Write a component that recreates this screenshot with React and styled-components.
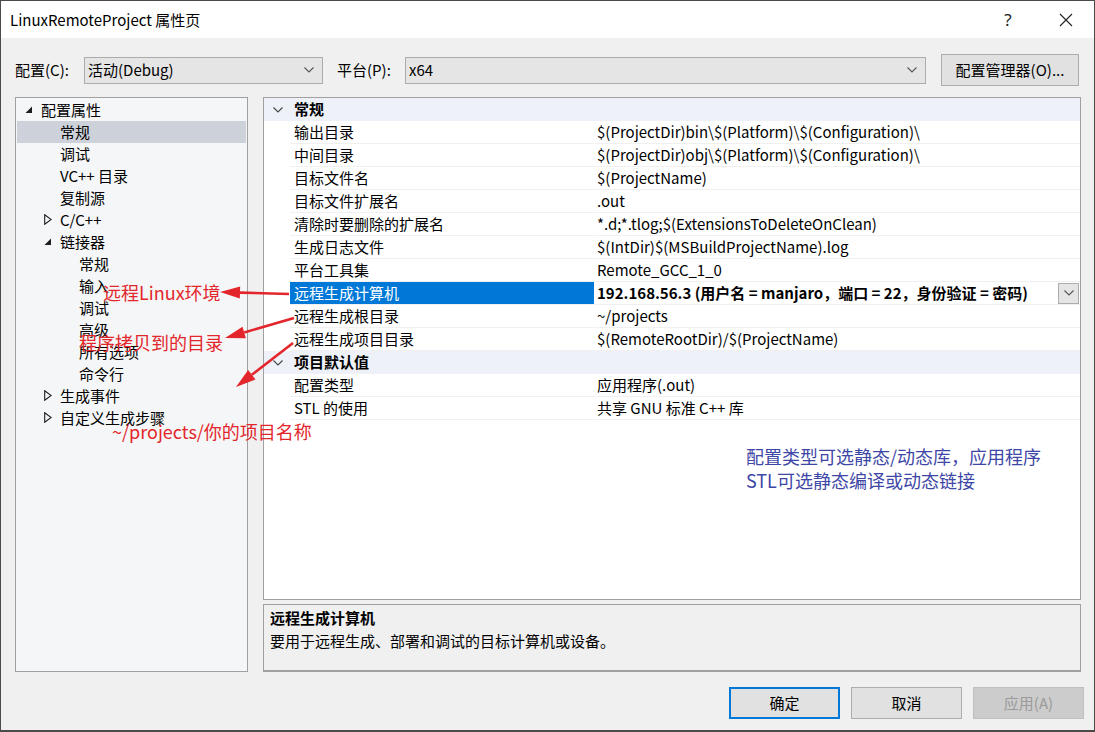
import React from 'react'
import styled, { createGlobalStyle } from 'styled-components'

const FONT = `"Noto Sans CJK SC", "Noto Sans", sans-serif`

const GlobalStyle = createGlobalStyle`
    html, body {
        margin: 0;
        padding: 0;
        background: #f0f0f0;
    }
    * {
        box-sizing: border-box;
    }
`

const Window = styled.div`
    position: relative;
    width: 1095px;
    height: 732px;
    display: flex;
    flex-direction: column;
    background: #f0f0f0;
    border: 1px solid #4a4a4a;
    border-bottom-width: 2px;
    font-family: ${FONT};
    font-size: 15px;
    color: #000;
    overflow: hidden;
`

const TitleBar = styled.div`
    height: 37px;
    flex-shrink: 0;
    display: flex;
    align-items: center;
    background: #fff;
    padding-left: 9px;
    .title__text {
        flex: 1;
        font-size: 15px;
        padding-bottom: 1px;
    }
    .title__help {
        width: 40px;
        text-align: center;
        font-family: "Noto Sans", sans-serif;
        font-size: 17px;
        color: #222;
        margin-right: 10px;
    }
    .title__close {
        width: 56px;
        display: flex;
        justify-content: center;
    }
`

const Body = styled.div`
    flex: 1;
    display: flex;
    flex-direction: column;
    padding: 16px 13px 0 14px;
`

const ConfigRow = styled.div`
    display: flex;
    align-items: center;
    height: 32px;
`

const Label = styled.span`
    width: ${p => p.$w}px;
    margin-left: ${p => p.$ml || 0}px;
    flex-shrink: 0;
    padding-bottom: 1px;
`

const Combo = styled.div`
    width: ${p => p.$w}px;
    height: 27px;
    display: flex;
    align-items: center;
    justify-content: space-between;
    padding: 0 8px 1px 3px;
    background: #e5e5e5;
    border: 1px solid #acacac;
`

const Button = styled.div`
    width: ${p => p.$w || 111}px;
    height: 32px;
    display: flex;
    align-items: center;
    justify-content: center;
    padding-bottom: 1px;
    margin-left: ${p => p.$ml || 0}px;
    background: ${p => (p.$disabled ? '#cccccc' : '#e1e1e1')};
    color: ${p => (p.$disabled ? '#9a9a9a' : '#000')};
    border: ${p => (p.$primary ? '2px solid #0078d7' : `1px solid ${p.$disabled ? '#bfbfbf' : '#adadad'}`)};
`

const Main = styled.div`
    margin-top: 11px;
    height: 575px;
    display: flex;
    gap: 15px;
`

const Tree = styled.div`
    width: 233px;
    flex-shrink: 0;
    background: #f5f6f7;
    border: 1px solid #a0a0a0;
    padding-top: 1px;
`

const TreeRow = styled.div`
    height: 22px;
    display: flex;
    align-items: center;
    margin: 0 1px;
    padding-bottom: 1px;
    padding-left: ${p => p.$level * 19 + 8}px;
    background: ${p => (p.$selected ? '#cdd1da' : 'transparent')};
    .tree__icon {
        width: 16px;
        flex-shrink: 0;
        display: flex;
        align-items: center;
    }
`

const RightColumn = styled.div`
    flex: 1;
    display: flex;
    flex-direction: column;
    gap: 4px;
`

const Grid = styled.div`
    height: 503px;
    background: #fff;
    border: 1px solid #a0a0a0;
`

const GridRow = styled.div`
    height: 23px;
    display: flex;
    background: ${p => (p.$category ? '#eef2f8' : '#fff')};
    font-weight: ${p => (p.$category ? 700 : 400)};
    .grid__gutter {
        width: 26px;
        flex-shrink: 0;
        display: flex;
        align-items: center;
        justify-content: center;
        padding-left: 2px;
    }
`

const NameCell = styled.div`
    width: 304px;
    flex-shrink: 0;
    display: flex;
    align-items: center;
    padding-left: 4px;
    padding-bottom: 1px;
    border-bottom: 1px solid ${p => (p.$category ? 'transparent' : '#f0f0f0')};
    background: ${p => (p.$selected ? '#0078d7' : 'transparent')};
    color: ${p => (p.$selected ? '#fff' : '#000')};
`

const ValueCell = styled.div`
    flex: 1;
    display: flex;
    align-items: center;
    padding-left: 2px;
    margin-left: 1px;
    border-bottom: 1px solid ${p => (p.$category ? 'transparent' : '#f0f0f0')};
    font-weight: ${p => (p.$bold ? 700 : 400)};
    .value__text {
        flex: 1;
        white-space: nowrap;
        padding-bottom: 1px;
    }
`

const DropButton = styled.div`
    width: 21px;
    height: 21px;
    margin-right: 1px;
    display: flex;
    align-items: center;
    justify-content: center;
    background: #e5e5e5;
    border: 1px solid #acacac;
`

const Description = styled.div`
    height: 68px;
    border: 1px solid #a0a0a0;
    border-bottom-width: 2px;
    background: #f0f0f0;
    padding: 1px 6px;
    line-height: 23px;
    .desc__title {
        font-weight: 700;
    }
`

const ButtonRow = styled.div`
    margin-top: 15px;
    margin-right: -3px;
    display: flex;
    justify-content: flex-end;
`

const Note = styled.div`
    position: absolute;
    left: ${p => p.$x}px;
    top: ${p => p.$y}px;
    font-size: 18px;
    line-height: ${p => p.$lh || 22}px;
    color: ${p => p.$color};
    white-space: nowrap;
    pointer-events: none;
`

const Overlay = styled.svg`
    position: absolute;
    left: 0;
    top: 0;
    pointer-events: none;
`

const Chevron = ({ color = '#444' }) => (
    <svg width='10' height='6' viewBox='0 0 10 6'>
        <polyline points='0.5,0.5 5,5 9.5,0.5' fill='none' stroke={color} strokeWidth='1.1' />
    </svg>
)

const TreeArrow = ({ open }) => (
    open ? (
        <svg width='8' height='8' viewBox='0 0 8 8'>
            <polygon points='7,0.5 7,7 0.5,7' fill='#1e1e1e' />
        </svg>
    ) : (
        <svg width='8' height='11' viewBox='0 0 8 11'>
            <polygon points='0.7,0.7 7.2,5.5 0.7,10.3' fill='none' stroke='#1e1e1e' strokeWidth='1.1' />
        </svg>
    )
)

const treeItems = [
    { label: '配置属性', level: 0, open: true },
    { label: '常规', level: 1, selected: true },
    { label: '调试', level: 1 },
    { label: 'VC++ 目录', level: 1 },
    { label: '复制源', level: 1 },
    { label: 'C/C++', level: 1, open: false },
    { label: '链接器', level: 1, open: true },
    { label: '常规', level: 2 },
    { label: '输入', level: 2 },
    { label: '调试', level: 2 },
    { label: '高级', level: 2 },
    { label: '所有选项', level: 2 },
    { label: '命令行', level: 2 },
    { label: '生成事件', level: 1, open: false },
    { label: '自定义生成步骤', level: 1, open: false },
]

const gridRows = [
    { category: '常规' },
    { name: '输出目录', value: '$(ProjectDir)bin\\$(Platform)\\$(Configuration)\\' },
    { name: '中间目录', value: '$(ProjectDir)obj\\$(Platform)\\$(Configuration)\\' },
    { name: '目标文件名', value: '$(ProjectName)' },
    { name: '目标文件扩展名', value: '.out' },
    { name: '清除时要删除的扩展名', value: '*.d;*.tlog;$(ExtensionsToDeleteOnClean)' },
    { name: '生成日志文件', value: '$(IntDir)$(MSBuildProjectName).log' },
    { name: '平台工具集', value: 'Remote_GCC_1_0' },
    { name: '远程生成计算机', value: '192.168.56.3 (用户名 = manjaro，端口 = 22，身份验证 = 密码)', selected: true },
    { name: '远程生成根目录', value: '~/projects' },
    { name: '远程生成项目目录', value: '$(RemoteRootDir)/$(ProjectName)' },
    { category: '项目默认值' },
    { name: '配置类型', value: '应用程序(.out)' },
    { name: 'STL 的使用', value: '共享 GNU 标准 C++ 库' },
]

const arrows = [
    { from: [288, 293], to: [219, 291] },
    { from: [293, 317], to: [224, 337] },
    { from: [292, 342], to: [235, 386] },
]

const Arrow = ({ from, to }) => {
    const dx = from[0] - to[0]
    const dy = from[1] - to[1]
    const len = Math.hypot(dx, dy)
    const ux = dx / len
    const uy = dy / len
    const bx = to[0] + ux * 20
    const by = to[1] + uy * 20
    const px = -uy * 6
    const py = ux * 6
    return (
        <g>
            <line x1={from[0]} y1={from[1]} x2={bx} y2={by} stroke='#e3262b' strokeWidth='2.6' />
            <polygon points={`${to[0]},${to[1]} ${bx + px},${by + py} ${bx - px},${by - py}`} fill='#e3262b' />
        </g>
    )
}

const App = () => {
    return (
        <Window>
            <GlobalStyle />
            <TitleBar>
                <span className='title__text'>LinuxRemoteProject 属性页</span>
                <span className='title__help'>?</span>
                <span className='title__close'>
                    <svg width='14' height='14' viewBox='0 0 14 14'>
                        <path d='M1 1 L13 13 M13 1 L1 13' stroke='#222' strokeWidth='1.1' />
                    </svg>
                </span>
            </TitleBar>
            <Body>
                <ConfigRow>
                    <Label $w={69}>配置(C):</Label>
                    <Combo $w={239}>
                        <span>活动(Debug)</span>
                        <Chevron color='#555' />
                    </Combo>
                    <Label $w={68} $ml={14}>平台(P):</Label>
                    <Combo $w={521}>
                        <span>x64</span>
                        <Chevron color='#555' />
                    </Combo>
                    <Button $w={138} $ml={15}>配置管理器(O)...</Button>
                </ConfigRow>
                <Main>
                    <Tree>
                        {treeItems.map((item, i) => (
                            <TreeRow key={i} $level={item.level} $selected={item.selected}>
                                <span className='tree__icon'>
                                    {item.open !== undefined && <TreeArrow open={item.open} />}
                                </span>
                                <span>{item.label}</span>
                            </TreeRow>
                        ))}
                    </Tree>
                    <RightColumn>
                        <Grid>
                            {gridRows.map((row, i) => row.category ? (
                                <GridRow key={i} $category>
                                    <span className='grid__gutter'><Chevron /></span>
                                    <NameCell $category>{row.category}</NameCell>
                                    <ValueCell $category />
                                </GridRow>
                            ) : (
                                <GridRow key={i}>
                                    <span className='grid__gutter' />
                                    <NameCell $selected={row.selected}>{row.name}</NameCell>
                                    <ValueCell $bold={row.selected}>
                                        <span className='value__text'>{row.value}</span>
                                        {row.selected && <DropButton><Chevron color='#555' /></DropButton>}
                                    </ValueCell>
                                </GridRow>
                            ))}
                        </Grid>
                        <Description>
                            <div className='desc__title'>远程生成计算机</div>
                            <div>要用于远程生成、部署和调试的目标计算机或设备。</div>
                        </Description>
                    </RightColumn>
                </Main>
                <ButtonRow>
                    <Button $primary>确定</Button>
                    <Button $ml={11}>取消</Button>
                    <Button $ml={11} $disabled>应用(A)</Button>
                </ButtonRow>
            </Body>

            <Overlay width='1095' height='732' viewBox='0 0 1095 732'>
                {arrows.map((a, i) => <Arrow key={i} from={a.from} to={a.to} />)}
            </Overlay>
            <Note $x={102} $y={280} $color='#e3262b'>远程Linux环境</Note>
            <Note $x={78} $y={330} $color='#e3262b'>程序拷贝到的目录</Note>
            <Note $x={111} $y={419} $color='#e3262b'>~/projects/你的项目名称</Note>
            <Note $x={745} $y={443} $lh={24} $color='#3e47a6'>
                配置类型可选静态/动态库，应用程序<br />STL可选静态编译或动态链接
            </Note>
        </Window>
    )
}

export default App
